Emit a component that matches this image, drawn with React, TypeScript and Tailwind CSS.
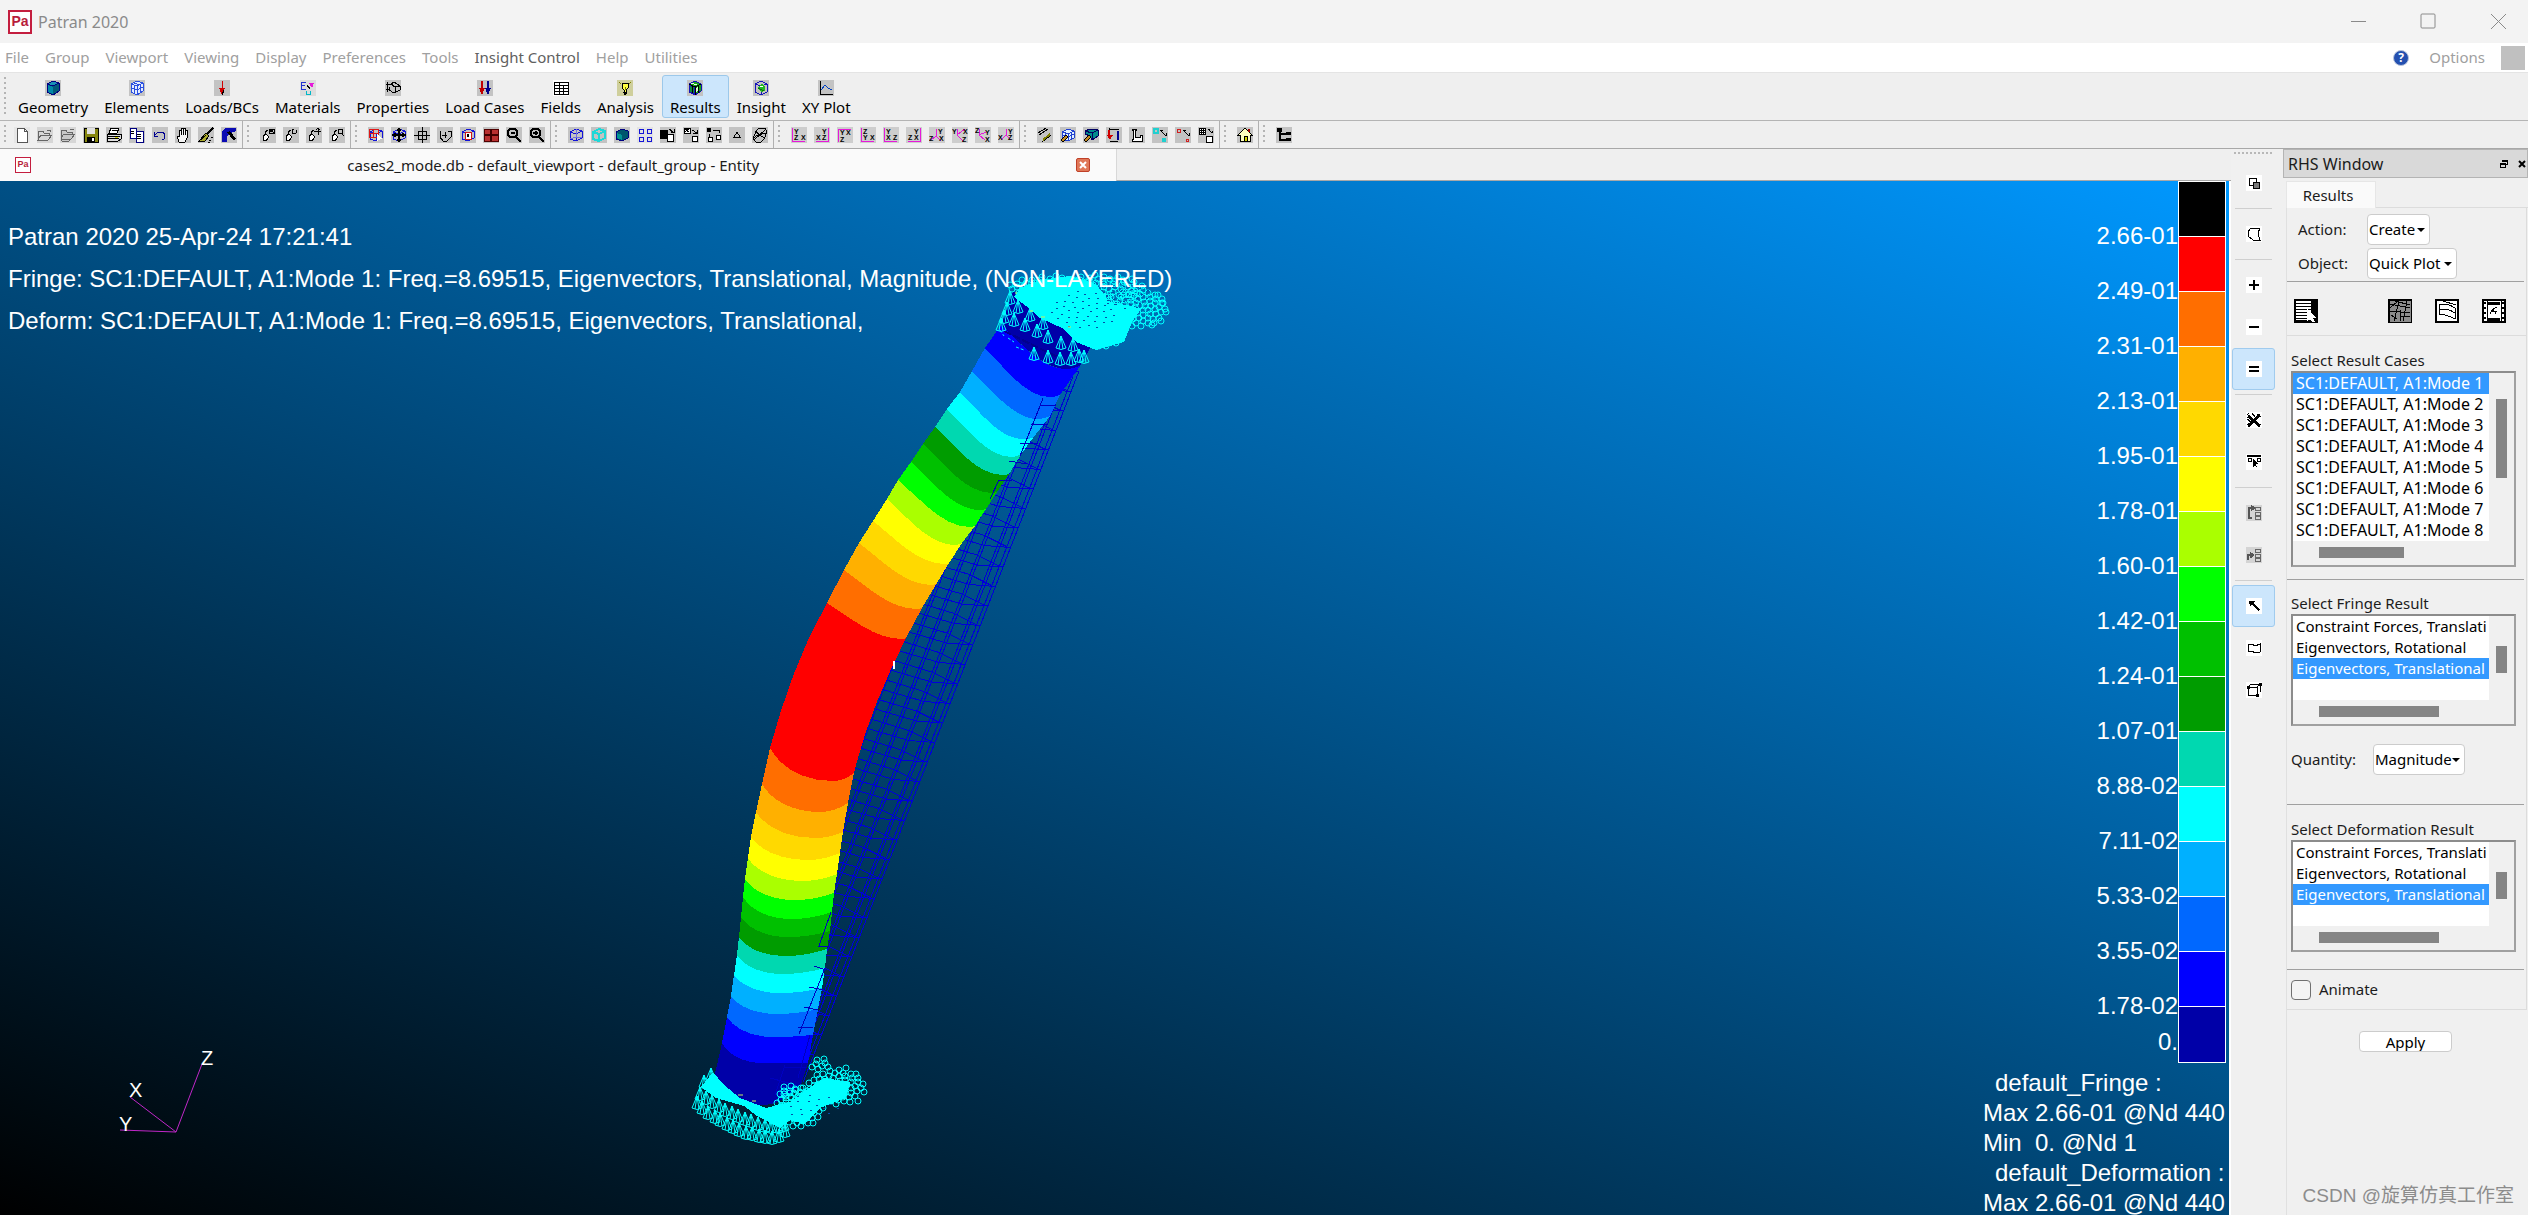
import { ReactNode, useState } from "react";
import { clsx } from "clsx";

type Point = [number, number];
type Boundary = { left: Point; low: Point; right: Point };
type Stroke = { d: string; stroke?: string; fill?: string; width?: number };
type Letter = { x: number; y: number; text: string };
type Glyph = { name: string; bg?: string; strokes: Stroke[]; letters?: Letter[] };

const BLACK = "#000000";
const BLUE = "#1414d8";
const MAGENTA = "#e619d9";
const CUBE = "M2 5L8 2L14 4V11L8 14L2 12ZM2 5L8 7L14 4M8 7V14";
const AXES = "M1 1V14H14";

const line = (d: string, stroke = BLACK, width = 1): Stroke => ({ d, stroke, width });
const area = (d: string, fill = BLACK, stroke = "none"): Stroke => ({ d, fill, stroke });
const glyph = (name: string, strokes: Stroke[], letters?: Letter[], bg = "#c3c3c3"): Glyph => ({ name, strokes, letters, bg });

function GlyphIcon({ icon, className = "size-4" }: { icon: Glyph; className?: string }) {
  return (
    <svg viewBox="0 0 16 16" className={clsx("shrink-0", className)} shapeRendering="crispEdges" aria-hidden="true">
      <rect width="16" height="16" fill={icon.bg} />
      {icon.strokes.map((part, index) => (
        <path key={index} d={part.d} stroke={part.stroke} strokeWidth={part.width ?? 1} fill={part.fill ?? "none"} />
      ))}
      {icon.letters?.map((letter, index) => (
        <text key={index} x={letter.x} y={letter.y} fontSize="7" fontWeight="700" fontFamily="Liberation Sans, sans-serif">
          {letter.text}
        </text>
      ))}
    </svg>
  );
}

const menus = ["File", "Group", "Viewport", "Viewing", "Display", "Preferences", "Tools", "Insight Control", "Help", "Utilities"];

const resultCube = [
  area("M2 4L8 1L14 4V11L8 15L2 12Z", "#19a519", "#1414b8"),
  area("M2 5L7 7V14L2 12Z", "#0c8c3c", "#1414b8"),
  area("M9 8L12 6V9L9 12Z", "#d8f8d8"),
  line("M2 4L8 7L14 4M8 7V15M5 6V13M11 6V13"),
  line("M4 3L10 5", "#e8ffe8")
];

const applications: Glyph[] = [
  glyph("Geometry", [area("M2 4L8 1L14 3V11L8 15L2 12Z", "#005a78", "#000080"), area("M2 4L8 1L14 3L8 6Z", "#1792b4", "#000080"), area("M3 5L8 7V14L3 12Z", "#0088a8")]),
  glyph("Elements", [area("M2 4L8 1L14 3V11L8 15L2 12Z", "#e4ecff", "#2a4fe0"), line("M2 4L8 6L14 3M8 6V15M2 8L8 10L14 7M5 5V13M11 5V13M5 3L11 5", "#2a4fe0")]),
  glyph("Loads/BCs", [line("M8 1V8", "#d00000"), area("M5 8H11L8 15Z", "#d00000"), line("M10 10L8 15")]),
  glyph(
    "Materials",
    [line("M1 2H6M1 2V9M1 5H5M1 9H6", "#2030d0"), area("M9 3H14L12 8Z", MAGENTA), line("M6 11V14H10V11", "#00b8c8"), line("M7 5L10 9")],
    undefined,
    "#dcdcdc"
  ),
  glyph("Properties", [line("M1 4H6L9 2L15 6V10L9 13L4 10V7M1 9H5M6 4L10 7L15 6M10 7V13M2 2V12")]),
  glyph("Load Cases", [line("M5 1V8", "#c00000", 2), area("M2 8H8L5 15Z", "#c00000"), line("M11 1V8", "#00008c", 2), area("M8 8H14L11 15Z", "#00008c")]),
  glyph("Fields", [line("M1 2H15V14H1ZM1 5H15M1 8H15M1 11H15M6 2V14M10 5V14")], undefined, "#ffffff"),
  glyph("Analysis", [area("M5 3H11V8L9 10V13H7V10L5 8Z", "#ffff40", BLACK), line("M2 2L4 4M14 2L12 4M8 7V10", "#808000"), line("M6 12H10M7 14H9")], undefined, "#cfcf9c"),
  glyph("Results", resultCube),
  glyph("Insight", [line("M2 4L8 1L14 4V12L8 15L2 12ZM2 4L8 6L14 4M8 6V15", "#1414b8"), area("M5 7L9 4L12 7V11L8 12Z", "#22b822"), line("M5 8L11 11", "#0c6c0c"), line("M7 6L10 7", "#ffffff")]),
  glyph("XY Plot", [line("M2 1V14H15"), line("M3 10L7 5L10 8L14 10", "#0040c0")])
];

const wand = "M3 9L6 7L9 10L6 14L3 13ZM5 8V5L8 3";
const pair = (name: string, extra: string) => glyph(name, [area("M3 9L6 7L9 10L6 14L3 13Z", "#ffffff", BLACK), line(wand), line(extra)]);
const axes = (name: string, d: string, letters: [number, number, string][]) =>
  glyph(name, [line(d, MAGENTA)], letters.map(([x, y, text]) => ({ x, y, text })), "#cdcdcd");

const iconGroups: Glyph[][] = [
  [
    glyph("New", [area("M3 1H10L13 4V15H3Z", "#ffffff", "#555555"), line("M10 1V4H13", "#555555")], undefined, "#e6e6e6"),
    glyph("Open", [area("M1 13V4H6L7 6H12V8M1 13L4 8H15L11 13Z", "#d8d8d8", "#666666"), line("M10 3H13V5", "#666666")], undefined, "#d6d6d6"),
    glyph("Open copy", [area("M1 11V3H6L7 5H12V7M1 11L4 7H15L12 11L9 14H2Z", "#c8c8c8", "#666666"), line("M2 12H11M10 2H14", "#666666")], undefined, "#d6d6d6"),
    glyph("Save", [area("M1 1H15V15H1Z", "#858510", BLACK), area("M4 1H12V7H4Z", "#e0e0e0"), area("M4 10H12V15H4Z"), area("M9 11H11V14H9Z", "#ffffff")]),
    glyph("Print", [area("M5 1H13L11 6H3Z", "#ffffff", BLACK), area("M1 7H15V12L12 14H1Z", "#dddddd", BLACK), line("M2 9H14M2 11H13M6 3H11"), area("M9 10H12V11H9Z", "#d8d800")]),
    glyph("Copy", [area("M1 1H7V11H1Z", "#ffffff", "#000080"), area("M7 4H14V15H7Z", "#ffffff", "#000080"), line("M2 4H5M2 6H5M8 7H12M8 9H12M8 11H12")]),
    glyph("Undo", [line("M2 5V9H6M3 8L6 5H11L13 8L12 12H10", "#000090")]),
    glyph("Pan", [area("M4 15L2 9H4V3H6V8V1H8V8V1H10V8V3H12V11L10 15Z", "#f4f4f4", BLACK)]),
    glyph("Clean", [line("M15 1L9 7", BLACK, 2), area("M8 6L11 9L7 14H1Z", "#a8a82a", BLACK), line("M3 13L8 8M11 13H13M13 10H15M10 15H12")]),
    glyph("Paint", [area("M1 5L4 1H15V4L9 6L6 10V15H1Z", "#0a0ab4"), area("M6 5L9 4L15 12L12 13Z")])
  ],
  [pair("Wand fit", "M9 2L14 6M14 2L9 6M9 2H14V6H9Z"), pair("Wand turn", "M9 2V6H13L14 3M9 2H11"), pair("Wand move", "M8 4H15M12 1V8M10 3L12 1L14 3"), pair("Wand zoom", "M9 2H13V6H9ZM12 6L15 9")],
  [
    glyph("Pick view", [line(CUBE, BLUE), line("M1 2H10V10H1ZM1 6H10M5 2V10", "#e01818"), area("M9 7L14 12H12L13 15L11 13L9 14Z", "#ffffff")]),
    glyph("Move view", [line(CUBE, BLUE), line("M1 8H15M8 1V15M4 6V10M12 6V10M6 3H10M6 13H10", BLACK, 2)]),
    glyph("Centre", [line("M4 4H12V12H4ZM0 8H16M8 0V16")]),
    glyph("Rotate", [line("M3 4V10L6 14H10L14 10V4M11 4H14M5 8H10M8 5V11")]),
    glyph("Fit view", [line(CUBE, BLUE), area("M5 5H11V12H5Z", "#ffffff", "#d01818"), area("M7 7H9V10H7Z")]),
    glyph("Tile", [area("M1 2H15V14H1Z", "#b83030", "#500000"), line("M8 2V14M1 8H15", "#400000", 2)]),
    glyph("Zoom out", [line("M4 2H9L11 4V8L9 10H4L2 8V4ZM5 6H9M10 10L15 15", BLACK, 2)]),
    glyph("Zoom in", [line("M4 2H9L11 4V8L9 10H4L2 8V4ZM4 6H9M10 10L15 15M7 4V8", BLACK, 2)])
  ],
  [
    glyph("Wireframe", [line(CUBE, BLUE), line("M8 2V10L2 12M8 10L14 11", "#7070e0")]),
    glyph("Hidden line", [line(CUBE, "#1ed8d8", 2)]),
    glyph("Shaded", [area("M2 5L8 2L14 4V11L8 14L2 12Z", "#00566c", "#000080"), area("M3 6L8 8V13L3 11Z", "#009494")]),
    glyph("Entities", [line("M2 2H6V6H2ZM10 2H14V6H10ZM2 10H6V14H2ZM10 10H14V14H10Z", BLUE)], undefined, "#e2e2e2"),
    glyph("Swap", [area("M0 3H8V12H0Z"), area("M7 7H13V14H7Z", "#ffffff", BLACK), line("M9 2L13 5M11 5H14V2")]),
    glyph("Plot erase", [area("M1 1H7V6H1Z", "#ffffff", BLACK), line("M2 2L6 5M2 5L6 2M9 3L14 6M10 6H14V3"), area("M9 9H14V14H9Z", "#ffffff", BLACK)]),
    glyph("Labels", [area("M1 1H5V5H1Z"), line("M7 3H13V6M3 7V13"), area("M2 10H6V14H2ZM10 8H14V12H10Z", "#ffffff", BLACK)]),
    glyph("Points", [line("M5 10L8 5L11 10Z")]),
    glyph("Sweep", [line("M4 4L7 1H13L15 5L12 12L9 15H4L1 12ZM1 11L6 8L14 6M4 4L7 8L13 11M2 13L13 3")])
  ],
  [
    axes("Front view", AXES, [[3, 7, "Y"], [3, 13, "Z"], [10, 13, "X"]]),
    axes("Rear view", "M14 1V14H2", [[8, 7, "Y"], [2, 13, "X"], [8, 13, "Z"]]),
    axes("Top view", "M1 15V2H14", [[3, 8, "Y"], [9, 8, "X"], [3, 15, "Z"]]),
    axes("Bottom view", AXES, [[3, 7, "Z"], [3, 13, "Y"], [10, 13, "X"]]),
    axes("Left view", AXES, [[3, 7, "Y"], [3, 13, "X"], [10, 13, "Z"]]),
    axes("Right view", "M14 1V14H2", [[8, 7, "Y"], [2, 13, "Z"], [8, 13, "X"]]),
    axes("Iso 1", "M7 2V9L2 13M7 9L12 14", [[9, 7, "Y"], [0, 14, "Z"], [10, 14, "X"]]),
    axes("Iso 2", "M5 2V8L13 2M5 8L11 14", [[0, 7, "Y"], [11, 7, "X"], [10, 15, "Z"]]),
    axes("Iso 3", "M4 2V8L11 5M4 8L10 13", [[0, 6, "Z"], [10, 8, "Y"], [10, 15, "X"]]),
    axes("Iso 4", "M8 2V8L3 13M8 8L13 13", [[10, 7, "Y"], [0, 13, "X"], [10, 13, "Z"]])
  ],
  [
    glyph("Curves", [line("M1 6L9 1M2 8L11 2M5 15L14 8"), line("M6 13L13 7", "#808000", 2)]),
    glyph("Mesh", [area("M2 5L8 2L14 4V11L8 14L2 12Z", "#e0f0ff", "#2040d0"), line("M2 5L8 7L14 4M8 7V14M2 8L8 10L14 7M5 5V13M11 5V13", "#2040d0"), area("M1 13L6 8L8 10L3 15Z", "#c08820", BLACK)]),
    glyph("Solid", [area("M2 4L7 2L15 3V9L9 13L7 9L2 7Z", "#008c8c", "#000060"), line("M2 4L9 6L15 3M9 6V13", "#000060"), area("M1 13L6 8L8 10L3 15Z", "#c08820", BLACK)]),
    glyph("Load marks", [line("M3 1V11M3 2H13"), area("M1 8H7L4 13Z", "#d00000"), line("M3 3V8", "#d00000", 2), line("M12 4V13", "#000090", 2), line("M4 14H12")]),
    glyph("Beam", [area("M3 2H7V3H6V10H11V8H13V14H3V12H4V3H3Z", "#ffffff", BLACK)]),
    glyph("Node size", [line("M2 2H6V6H2ZM11 12H13V14H11Z", "#20d0d0", 2), line("M8 3L14 9M8 3H11M14 6V9")]),
    glyph("Point size", [line("M2 2H5V5H2ZM11 12H13V14H11Z", "#d02020"), line("M8 3L14 9M8 3H11M14 6V9")]),
    glyph("Mesh size", [area("M1 1H7V7H1Z", "#ffffff", BLACK), line("M3 1V7M5 1V7M1 3H7M1 5H7M10 2L14 6M10 2H12M14 4V6"), area("M8 9H14V15H8Z", "#ffffff", BLACK)])
  ],
  [glyph("Home", [area("M1 8L8 1L15 8H13V14H3V8Z", "#ffffc0", BLACK), line("M12 2V5", "#a00000", 2), area("M7 9H10V14H7Z", "#d8d800", BLACK)])],
  [glyph("Model tree", [area("M1 1H6V5H1ZM10 5H15V8H10ZM10 11H15V14H10Z"), line("M4 5V13H10M4 7H10", BLACK, 2)])]
];

const WHITE = "#ffffff";
const pickGroups: Glyph[][] = [
  [glyph("Overlap", [line("M3 3H10V10H3Z"), area("M7 7H13V13H7Z", "#777777", BLACK)], undefined, WHITE)],
  [glyph("Polygon pick", [line("M5 2H14L12 7L14 14H7L2 10V6Z")], undefined, WHITE)],
  [
    glyph("Add", [line("M3 8H13M8 3V13", BLACK, 2)], undefined, WHITE),
    glyph("Remove", [line("M3 8H13", BLACK, 2)], undefined, WHITE),
    glyph("Replace", [line("M3 6H13M3 10H13", BLACK, 2)], undefined, WHITE)
  ],
  [
    glyph("Clear pick", [line("M2 4L14 14M14 3L2 14", BLACK, 3), line("M6 1L9 5M1 7L5 10M11 2L13 5M1 3L3 1")], undefined, WHITE),
    glyph("Pick list", [line("M1 2H15", BLACK, 2), line("M2 4H5V7H2ZM11 4H14V7H11Z"), area("M7 5L12 10H10L11 14L9 12L7 13Z")], undefined, WHITE)
  ],
  [
    glyph("Branch down", [line("M8 3H3V13H6M5 1L8 3L5 5", "#555555", 2), line("M9 2H14V5H9ZM9 7H14V10H9ZM9 11H14V14H9Z", "#666666")], undefined, "#d4d4d4"),
    glyph("Branch up", [line("M2 13V8H7M4 6L7 8L4 11", "#555555", 2), line("M9 2H14V5H9ZM9 7H14V10H9ZM9 11H14V14H9Z", "#666666")], undefined, "#d4d4d4")
  ],
  [
    glyph("Arrow pick", [area("M3 3H9L7 5L14 11L12 13L6 6L4 9Z")], undefined, WHITE),
    glyph("Visible faces", [line("M2 4H6L9 6L14 4V12L9 13L6 11H2Z")], undefined, WHITE),
    glyph("Box pick", [line("M2 5H11V13H2ZM5 2H14V10M11 5L14 2M2 5L5 2M1 4H3V6H1ZM10 12H12V14H10ZM13 1H15V3H13Z")], undefined, WHITE)
  ]
];

const legend = [
  { color: "#000000", label: "2.66-01" },
  { color: "#ff0000", label: "2.49-01" },
  { color: "#ff6e00", label: "2.31-01" },
  { color: "#ffb000", label: "2.13-01" },
  { color: "#ffd900", label: "1.95-01" },
  { color: "#ffff00", label: "1.78-01" },
  { color: "#aaff00", label: "1.60-01" },
  { color: "#00ff00", label: "1.42-01" },
  { color: "#00c000", label: "1.24-01" },
  { color: "#009c00", label: "1.07-01" },
  { color: "#00d8b0", label: "8.88-02" },
  { color: "#00ffff", label: "7.11-02" },
  { color: "#00b0ff", label: "5.33-02" },
  { color: "#0068ff", label: "3.55-02" },
  { color: "#0000ff", label: "1.78-02" },
  { color: "#0000a8", label: "0." }
];

const edge = (lx: number, ly: number, bx: number, by: number, rx: number, ry: number): Boundary => ({
  left: [lx, ly],
  low: [bx, by],
  right: [rx, ry]
});

const boundaries: Boundary[] = [
  edge(1001, 325, 1066, 369, 1080, 366),
  edge(985, 348, 1050, 397, 1060, 395),
  edge(972, 371, 1038, 419, 1050, 416),
  edge(960, 392, 1023, 439, 1033, 438),
  edge(947, 409, 1012, 457, 1022, 453),
  edge(935, 427, 1003, 475, 1009, 474),
  edge(923, 444, 992, 493, 997, 492),
  edge(911, 462, 980, 510, 986, 509),
  edge(898, 480, 970, 527, 975, 526),
  edge(887, 499, 955, 545, 962, 543),
  edge(873, 521, 945, 564, 949, 563),
  edge(859, 543, 932, 585, 937, 583),
  edge(844, 570, 917, 609, 922, 608),
  edge(827, 603, 903, 639, 906, 638),
  edge(770, 748, 833, 781, 854, 773),
  edge(762, 784, 820, 812, 848, 803),
  edge(756, 812, 815, 838, 843, 832),
  edge(751, 837, 808, 860, 840, 853),
  edge(748, 858, 802, 881, 837, 874),
  edge(745, 879, 795, 900, 834, 893),
  edge(743, 897, 792, 919, 832, 912),
  edge(741, 917, 788, 937, 830, 931),
  edge(739, 937, 785, 956, 827, 949),
  edge(737, 955, 782, 974, 825, 968),
  edge(734, 975, 780, 993, 822, 988),
  edge(731, 996, 777, 1014, 818, 1009),
  edge(727, 1017, 773, 1037, 813, 1035),
  edge(722, 1043, 763, 1063, 808, 1063),
  edge(714, 1078, 762, 1105, 801, 1085)
];

const lowerColors = legend.slice(2).map((step) => step.color);
const bandColors = [...lowerColors.slice(0, -1).reverse(), "#ff0000", ...lowerColors];

// The upper half of the column is seen more edge-on, so its rings bulge less.
function handles({ left, low }: Boundary) {
  const dx = low[0] - left[0];
  const dy = low[1] - left[1];
  const [sx, sy, ex] = left[1] > 700 ? [0.15, 0.55, 0.5] : [0.32, 0.42, 0.38];
  return { first: `${left[0] + dx * sx} ${left[1] + dy * sy}`, second: `${low[0] - dx * ex} ${low[1]}` };
}

function forward(boundary: Boundary) {
  const { low, right } = boundary;
  const { first, second } = handles(boundary);
  return `C${first} ${second} ${low[0]} ${low[1]} Q${(low[0] + right[0]) / 2} ${low[1]} ${right[0]} ${right[1]}`;
}

function backward(boundary: Boundary) {
  const { left, low, right } = boundary;
  const { first, second } = handles(boundary);
  return `Q${(low[0] + right[0]) / 2} ${low[1]} ${low[0]} ${low[1]} C${second} ${first} ${left[0]} ${left[1]}`;
}

function bandPath(index: number) {
  const top = boundaries[index];
  const bottom = boundaries[index + 1];
  const isRed = bandColors[index] === "#ff0000";
  const rightSide = isRed ? "C883 684 865 727 854 773" : `L${bottom.right[0]} ${bottom.right[1]}`;
  const leftSide = isRed ? "C783 700 801 648 827 603" : "Z";
  return `M${top.left[0]} ${top.left[1]} ${forward(top)} ${rightSide} ${backward(bottom)} ${leftSide}`;
}

// Undeformed mesh: columns run parallel to its right-hand edge.
const meshRight = (y: number) => 1081 - (y - 366) * 0.388;
const meshColumns = [0, 4, 11, 14, 27, 30, 42, 45, 57, 60, 72, 75, 84];
const meshRows = Array.from({ length: 36 }, (_, index) => 372 + index * 19.5);

const cone = (x: number, y: number) => `M${x} ${y}l-5 12M${x} ${y}l-2 13M${x} ${y}l2 13M${x} ${y}l5 12M${x - 5} ${y + 12}q5 3 10 0`;

const topCones: Point[] = [
  [1007, 302], [1014, 313], [1025, 318], [1037, 324], [1048, 330], [1061, 336], [1073, 338], [1010, 291], [1018, 300], [1030, 308],
  [1001, 318], [1034, 347], [1048, 350], [1060, 352], [1071, 352], [1084, 350], [1043, 316], [1079, 349], [1004, 310]
];
const bottomCones: Point[] = [
  [700, 1087], [706, 1091], [712, 1095], [719, 1099], [725, 1103], [732, 1106], [738, 1109], [745, 1112], [751, 1114], [758, 1117], [765, 1119],
  [771, 1120], [778, 1120], [784, 1118], [708, 1106], [715, 1110], [720, 1113], [727, 1117], [733, 1120], [739, 1123], [746, 1126], [752, 1127],
  [759, 1129], [765, 1130], [772, 1131], [779, 1129], [785, 1124], [704, 1075], [711, 1068], [697, 1096], [702, 1101], [785, 1108]
];

function scatter(cx: number, cy: number, rx: number, ry: number, count: number, seed: number): Point[] {
  return Array.from({ length: count }, (_, index) => {
    const angle = (index + seed) * 2.39996;
    const reach = Math.sqrt((index + 0.5) / count);
    return [Math.round(cx + Math.cos(angle) * rx * reach), Math.round(cy + Math.sin(angle) * ry * reach)];
  });
}

const topRings = [
  ...scatter(1050, 288, 42, 12, 60, 1),
  ...scatter(1098, 288, 46, 13, 70, 4),
  ...scatter(1140, 308, 26, 19, 60, 2),
  ...scatter(1105, 322, 20, 26, 60, 3)
];
const bottomRings = [
  ...scatter(835, 1087, 27, 18, 60, 1),
  ...scatter(800, 1107, 24, 20, 60, 2),
  ...scatter(820, 1065, 10, 7, 8, 3),
  ...scatter(792, 1094, 14, 10, 18, 5)
];

const outliers: Point[] = [[1158, 295], [1163, 303], [1166, 312], [1161, 321], [1152, 325], [846, 1068], [856, 1074], [863, 1084], [864, 1092], [858, 1101]];

function ModelPlot() {
  return (
    <svg viewBox="0 181 2229 1034" preserveAspectRatio="xMinYMin meet" className="absolute inset-0 size-full" role="img" aria-label="Mode shape">
      <g stroke="#0000d8" fill="none" shapeRendering="crispEdges">
        {meshColumns.map((offset) => (
          <path key={offset} d={`M${meshRight(372 + offset) - offset} ${372 + offset}L${meshRight(1082) - offset} 1082`} />
        ))}
        {meshRows.map((y) => (
          <path key={y} d={`M${meshRight(y)} ${y}l-26 -2l-62 -18M${meshRight(y) - 4} ${y - 1}l-22 -11l-56 -17`} />
        ))}
      </g>

      <g shapeRendering="crispEdges">
        <path d="M1013 292L1001 325C1020 343 1044 369 1066 369Q1075 369 1080 366L1092 345L1060 300Z" fill="#0000a8" />
        {bandColors.map((color, index) => (
          <path key={index} d={bandPath(index)} fill={color} />
        ))}
        <path
          d="M1043 398L1040 406L1020 456M1040 405H1056M1031 424H1048M1020 443H1038M1009 461L1027 464M999 480L990 499M999 480H1012M831 912L819 946H829M825 968L799 1034M814 966L826 970M809 987L824 990M804 1007L818 1010M798 1027H813M810 1035L798 1078M785 1065L775 1095M784 1067H806M770 1078L800 1086"
          stroke="#0000c0"
          fill="none"
        />
        <path d="M1004 331L1076 366" stroke="#000090" strokeWidth="2" fill="none" strokeDasharray="8 2" />
      </g>

      <g fill="#00ffff" shapeRendering="crispEdges">
        <path d="M1014 297L1020 288L1040 280L1070 276L1096 284L1110 302L1142 308L1132 322L1124 342L1096 350L1076 342L1062 328L1040 318L1026 306Z" />
        <path d="M713 1072L701 1087L716 1098L744 1106L757 1116L780 1128L790 1120L804 1124L820 1108L846 1098L850 1082L824 1078L806 1090L790 1102L766 1108L740 1098L724 1085Z" />
      </g>
      <g stroke="#00ffff" fill="none">
        {[...topRings, ...bottomRings, ...outliers].map(([x, y], index) => (
          <circle key={index} cx={x} cy={y} r="3" />
        ))}
        {[...topCones, ...bottomCones].map(([x, y], index) => (
          <path key={index} d={cone(x, y)} />
        ))}
        <path d="M1000 330L1004 336M1008 338L1014 342M1016 347L1024 350" strokeDasharray="3 2" />
      </g>
      <g fill="#0050a8" shapeRendering="crispEdges">
        {[...scatter(1084, 310, 34, 20, 46, 7), ...scatter(1125, 296, 24, 14, 24, 3), ...scatter(812, 1106, 26, 14, 18, 5)].map(([x, y], index) => (
          <rect key={index} x={x} y={y} width="2" height="1" />
        ))}
      </g>
      <path d="M1015 293h2M1030 311h3M1041 317h4M1068 327h3M738 1095h5M752 1101h4" stroke="#c8f060" />
      <path d="M894 661V669" stroke="#ffffff" strokeWidth="2" />

      <g stroke="#c027c8" fill="none">
        <path d="M176 1132L202 1064M176 1132L130 1097M176 1132L120 1130" />
      </g>
      <g fill="#ffffff" fontSize="20" fontFamily="Liberation Sans, Arial, sans-serif">
        <text x="201" y="1065">Z</text>
        <text x="129" y="1097">X</text>
        <text x="119" y="1131">Y</text>
      </g>
    </svg>
  );
}

function Viewport() {
  return (
    <main className="relative flex min-h-0 flex-1 justify-between overflow-hidden border-r-2 border-white bg-[linear-gradient(23deg,#000000,#0098ff)] font-['Liberation_Sans',Arial,sans-serif] text-[24px] text-white">
      <ModelPlot />
      <div className="relative pt-[35px] pl-2 leading-[42px] whitespace-pre">
        <p>Patran 2020 25-Apr-24 17:21:41</p>
        <p>Fringe: SC1:DEFAULT, A1:Mode 1: Freq.=8.69515, Eigenvectors, Translational, Magnitude, (NON-LAYERED)</p>
        <p>Deform: SC1:DEFAULT, A1:Mode 1: Freq.=8.69515, Eigenvectors, Translational,</p>
      </div>
      <div className="relative flex flex-col items-end pr-[3px]">
        <ul className="border border-white">
          {legend.map((step, index) => (
            <li
              key={step.label}
              className={clsx("relative h-[55px] w-[46px]", index < legend.length - 1 && "border-b border-white")}
              style={{ backgroundColor: step.color }}
            >
              <span className={clsx("absolute right-full mr-px leading-6 whitespace-nowrap", index < legend.length - 1 ? "-bottom-3" : "bottom-2")}>
                {step.label}
              </span>
            </li>
          ))}
        </ul>
        <div className="mt-[5px] w-[243px] leading-[30px] whitespace-pre">
          <p className="pl-3">default_Fringe :</p>
          <p>Max 2.66-01 @Nd 440</p>
          <p>Min  0. @Nd 1</p>
          <p className="pl-3">default_Deformation :</p>
          <p>Max 2.66-01 @Nd 440</p>
        </div>
      </div>
    </main>
  );
}

function Brand({ className }: { className: string }) {
  return (
    <span className={clsx("flex shrink-0 items-center justify-center border-[#c41e3f] bg-white font-['Liberation_Sans',Arial,sans-serif] font-bold text-[#b81d3c]", className)}>
      Pa
    </span>
  );
}

function TitleBar() {
  return (
    <header className="flex h-[43px] shrink-0 items-center bg-[#f3f3f3] pr-[20px] pl-2 text-[#8a8a8a]">
      <Brand className="size-6 border-2 text-[14px]" />
      <h1 className="ml-[6px] flex-1 text-[16px]">Patran 2020</h1>
      <div className="flex gap-[52px]">
        <button type="button" aria-label="Minimize">
          <svg viewBox="0 0 18 18" className="size-[18px]" stroke="#8a8a8a"><path d="M1 8.500H16" /></svg>
        </button>
        <button type="button" aria-label="Maximize">
          <svg viewBox="0 0 18 18" className="size-[18px]" stroke="#8a8a8a" fill="none"><rect x="1" y="1" width="14" height="14" rx="1" /></svg>
        </button>
        <button type="button" aria-label="Close">
          <svg viewBox="0 0 18 18" className="size-[18px]" stroke="#8a8a8a"><path d="M1 1L16 16M16 1L1 16" /></svg>
        </button>
      </div>
    </header>
  );
}

function MenuBar() {
  return (
    <nav className="flex h-[30px] shrink-0 items-center border-b border-[#e4e4e4] bg-white pr-[3px] pl-[5px] text-[#a0a0a0]">
      <div className="flex flex-1 gap-4">
        {menus.map((menu) => (
          <button key={menu} type="button" className={clsx("whitespace-nowrap", menu === "Insight Control" && "text-[#606060]")}>
            {menu}
          </button>
        ))}
      </div>
      <button type="button" aria-label="Help topics" className="mr-[20px] flex size-4 items-center justify-center rounded-full border border-[#b8c4dc] bg-[#2450b0] text-[12px] font-bold text-white">
        ?
      </button>
      <button type="button" className="mr-4">Options</button>
      <span className="size-6 bg-[#c0c0c0]" />
    </nav>
  );
}

function Grip() {
  return <span className="my-1 ml-[4px] w-[2px] shrink-0 self-stretch bg-[repeating-linear-gradient(#b4b4b4_0_2px,transparent_2px_5px)]" />;
}

function ApplicationBar() {
  const [active, setActive] = useState("Results");

  return (
    <div className="flex h-12 shrink-0 items-stretch border-b border-[#b4b4b4] bg-[#efefef] py-[2px]">
      <span className="-my-[2px] flex w-[10px] pr-1">
        <Grip />
      </span>
      {applications.map((app) => (
        <button
          key={app.name}
          type="button"
          onClick={() => setActive(app.name)}
          className={clsx(
            "flex flex-col items-center rounded-[3px] border px-[7px] pt-1 leading-[23px] whitespace-nowrap text-black",
            active === app.name ? "border-[#9cc8ea] bg-[#cce6fc]" : "border-transparent"
          )}
        >
          <GlyphIcon icon={app} />
          {app.name}
        </button>
      ))}
    </div>
  );
}

function IconBar() {
  return (
    <div className="flex h-7 shrink-0 border-b border-[#a8a8a8] bg-[#efefef]">
      {iconGroups.map((group, index) => (
        <div key={index} className={clsx("flex items-center", index < iconGroups.length - 1 && "border-r border-[#b0b0b0] pr-[2px]")}>
          <span className={clsx("flex self-stretch", index === 0 ? "w-[10px]" : "w-[13px]")}>
            <Grip />
          </span>
          {group.map((icon) => (
            <button key={icon.name} type="button" aria-label={icon.name} className="flex w-[23px] justify-center">
              <GlyphIcon icon={icon} />
            </button>
          ))}
        </div>
      ))}
    </div>
  );
}

function DocumentTabs() {
  return (
    <div className="flex h-8 shrink-0">
      <div className="flex w-1/2 items-center bg-[#fafafa] pr-[26px] pl-[15px]">
        <Brand className="size-4 border text-[9px]" />
        <span className="flex-1 text-center">cases2_mode.db - default_viewport - default_group - Entity</span>
        <button type="button" aria-label="Close viewport" className="flex size-[14px] items-center justify-center rounded-[2px] border border-[#c04028] bg-[#e07858]">
          <svg viewBox="0 0 10 10" className="size-[10px]" stroke="#ffffff" strokeWidth="2"><path d="M2 2L8 8M8 2L2 8" /></svg>
        </button>
      </div>
      <div className="flex-1 border-b border-l border-b-[#a8a8a8] border-l-[#d8d8d8] bg-[#efefef]" />
    </div>
  );
}

function PickBar() {
  const pressed = ["Replace", "Arrow pick"];

  return (
    <aside className="flex w-[52px] shrink-0 flex-col bg-[#f0f0f0] pr-2 pl-px">
      <span className="mx-[2px] mt-[3px] mb-2 h-[2px] bg-[repeating-linear-gradient(90deg,#b8b8b8_0_2px,transparent_2px_4px)]" />
      {pickGroups.map((group, index) => (
        <div key={index} className="flex flex-col">
          {index > 0 && <hr className="mx-[3px] my-1 border-[#cfcfcf]" />}
          {group.map((icon) => (
            <button
              key={icon.name}
              type="button"
              aria-label={icon.name}
              className={clsx("flex h-[42px] items-center justify-center rounded-[3px] border", pressed.includes(icon.name) ? "border-[#a0cbee] bg-[#cce6fc]" : "border-transparent")}
            >
              <GlyphIcon icon={icon} />
            </button>
          ))}
        </div>
      ))}
    </aside>
  );
}

function Dropdown({ id, label, value, className }: { id: string; label: string; value: string; className: string }) {
  return (
    <>
      <label htmlFor={id}>{label}</label>
      <span className={clsx("relative flex", className)}>
        <select id={id} defaultValue={value} className="h-[31px] w-full appearance-none rounded-[4px] border border-[#cccccc] bg-white pl-px text-black">
          <option>{value}</option>
        </select>
        <svg viewBox="0 0 8 4" className="pointer-events-none absolute top-[14px] right-[5px] h-1 w-2"><path d="M0 0H8L4 4Z" /></svg>
      </span>
    </>
  );
}

type ResultListProps = {
  title: string;
  items: string[];
  initial: string;
  bodyClass: string;
  verticalClass: string;
  horizontalClass: string;
};

function ResultList({ title, items, initial, bodyClass, verticalClass, horizontalClass }: ResultListProps) {
  const [selected, setSelected] = useState(initial);

  return (
    <section className="pr-[10px] pl-1">
      <h2 className="leading-[22px]">{title}</h2>
      <div className="border-2 border-[#8c8c8c] border-r-[#a0a0a0] border-b-[#a0a0a0]">
        <div className="flex">
          <ul role="listbox" aria-label={title} className={clsx("min-w-0 flex-1 overflow-hidden bg-white leading-[21px] whitespace-nowrap text-black", bodyClass)}>
            {items.map((item) => (
              <li
                key={item}
                role="option"
                aria-selected={item === selected}
                onClick={() => setSelected(item)}
                className={clsx("pl-[3px]", item === selected && "bg-[#3399ff] text-white")}
              >
                {item}
              </li>
            ))}
          </ul>
          <span className="w-[25px] shrink-0 pl-[7px]">
            <span className={clsx("block w-[11px] bg-[#858585]", verticalClass)} />
          </span>
        </div>
        <div className="h-[24px] pt-[6px] pl-[26px]">
          <span className={clsx("block h-[11px] bg-[#858585]", horizontalClass)} />
        </div>
      </div>
    </section>
  );
}

function Rule() {
  return <hr className="mr-[2px] border-[#a0a0a0]" />;
}

function PlotButton({ label, className, children }: { label: string; className?: string; children: ReactNode }) {
  return (
    <button type="button" aria-label={label} className={clsx("size-6", className)}>
      <svg viewBox="0 0 24 24" className="size-6" shapeRendering="crispEdges" stroke="#000000" fill="none">
        <rect x="1" y="1" width="22" height="22" fill="#ffffff" strokeWidth="2" />
        {children}
      </svg>
    </button>
  );
}

const cases = Array.from({ length: 8 }, (_, index) => `SC1:DEFAULT, A1:Mode ${index + 1}`);
const resultTypes = ["Constraint Forces, Translati", "Eigenvectors, Rotational", "Eigenvectors, Translational"];

function ResultsPanel() {
  return (
    <aside className="flex w-[245px] shrink-0 flex-col bg-[#f0f0f0]">
      <div className="flex h-[29px] items-center border border-[#b4b4b4] bg-[#d9d9d9] pr-px pl-1">
        <h2 className="flex-1 text-[16px]">RHS Window</h2>
        <button type="button" aria-label="Float" className="mr-[10px]">
          <svg viewBox="0 0 9 9" className="size-[9px]" shapeRendering="crispEdges" stroke="#000000" fill="none"><path d="M3 1H8V5H6M1 4H6V8H1ZM3 2H8M1 5H6" /></svg>
        </button>
        <button type="button" aria-label="Close panel">
          <svg viewBox="0 0 8 8" className="size-2" stroke="#000000" strokeWidth="2"><path d="M1 1L7 7M7 1L1 7" /></svg>
        </button>
      </div>
      <div className="mt-[3px] ml-[3px] flex h-[27px]">
        <button type="button" className="w-[90px] border border-b-0 border-[#e6e6e6] bg-[#fafafa] pr-[6px]">Results</button>
        <span className="flex-1 border-b border-[#dcdcdc]" />
      </div>
      <div className="ml-[3px] flex flex-1 flex-col border-l border-[#e0e0e0]">
        <div className="mr-px flex flex-col border-r border-[#dcdcdc]">
          <div className="grid grid-cols-[69px_1fr] items-center gap-y-[3px] pt-[6px] pb-[2px] pl-[11px]">
            <Dropdown id="action" label="Action:" value="Create" className="w-[63px]" />
            <Dropdown id="object" label="Object:" value="Quick Plot" className="w-[90px]" />
          </div>
          <Rule />
          <div className="flex gap-[23px] pt-[17px] pb-3 pl-[7px]">
            <PlotButton label="Select results" className="mr-[47px]">
              <path d="M2 4H17M2 7H17M2 10H17M2 13H17M2 16H14M2 19H14" />
              <path d="M17 1H23V23H2V21H17Z" fill="#000000" />
              <path d="M13 10L23 19L19 19L21 23L18 23L16 20L13 22Z" fill="#ffffff" stroke="none" />
            </PlotButton>
            <PlotButton label="Fringe attributes">
              <path d="M1 1H23V23H1Z" fill="#8c8c8c" />
              <path d="M2 5L22 9M2 12L22 14M6 22L11 2M15 22L19 2M2 9L9 3M12 17H22M3 16L9 20M12 11V22M7 2L22 6" />
            </PlotButton>
            <PlotButton label="Deform attributes">
              <path d="M4 5C10 5 14 5 20 9M4 10C10 10 14 10 20 14M4 15C10 15 14 17 20 20M4 5V15M20 9V20M8 2L21 6" />
            </PlotButton>
            <PlotButton label="Animation attributes">
              <path d="M5 1V23M19 1V23" />
              <path d="M2 4H4M2 9H4M2 14H4M2 19H4M20 4H22M20 9H22M20 14H22M20 19H22" strokeWidth="2" />
              <path d="M6 4H18M6 20H18" strokeWidth="3" />
              <path d="M8 15L11 10L15 8M11 10L14 15M9 12H15" />
            </PlotButton>
          </div>
          <hr className="border-[#dcdcdc]" />
          <div className="pt-[13px] pb-3">
            <ResultList title="Select Result Cases" items={cases} initial={cases[0]} bodyClass="h-[168px] text-[16px]" verticalClass="mt-[26px] h-[79px]" horizontalClass="w-[85px]" />
          </div>
          <Rule />
          <div className="pt-3 pb-[18px]">
            <ResultList title="Select Fringe Result" items={resultTypes} initial={resultTypes[2]} bodyClass="h-[84px]" verticalClass="mt-[30px] h-[27px]" horizontalClass="w-[120px]" />
          </div>
          <div className="grid grid-cols-[82px_1fr] items-center pb-[29px] pl-1">
            <Dropdown id="quantity" label="Quantity:" value="Magnitude" className="w-[92px]" />
          </div>
          <Rule />
          <div className="pt-[13px] pb-[17px]">
            <ResultList title="Select Deformation Result" items={resultTypes} initial={resultTypes[2]} bodyClass="h-[84px]" verticalClass="mt-[30px] h-[27px]" horizontalClass="w-[120px]" />
          </div>
          <Rule />
          <label className="flex h-[39px] items-center gap-2 pl-1">
            <input type="checkbox" className="size-5 appearance-none rounded-[4px] border border-[#707070] bg-[#f4f4f4] checked:bg-[#3399ff]" />
            Animate
          </label>
          <hr className="border-[#dcdcdc]" />
        </div>
        <button type="button" className="mt-[21px] ml-[72px] h-[21px] w-[93px] overflow-hidden rounded-[4px] border border-[#cccccc] bg-white leading-[20px] text-black">
          Apply
        </button>
        <p className="mt-auto mr-[14px] mb-[5px] text-right font-['Liberation_Sans','Noto_Sans_CJK_SC',sans-serif] text-[19px] leading-7 whitespace-nowrap text-[#8c8c8c]">
          CSDN @旋算仿真工作室
        </p>
      </div>
    </aside>
  );
}

export default function App() {
  return (
    <div className="flex h-screen flex-col overflow-hidden bg-[#f0f0f0] font-['Noto_Sans','Open_Sans',sans-serif] text-[15px] text-[#1c1c1c]">
      <TitleBar />
      <MenuBar />
      <ApplicationBar />
      <IconBar />
      <div className="flex min-h-0 flex-1">
        <div className="flex min-w-0 flex-1 flex-col">
          <DocumentTabs />
          <Viewport />
        </div>
        <PickBar />
        <ResultsPanel />
      </div>
    </div>
  );
}
